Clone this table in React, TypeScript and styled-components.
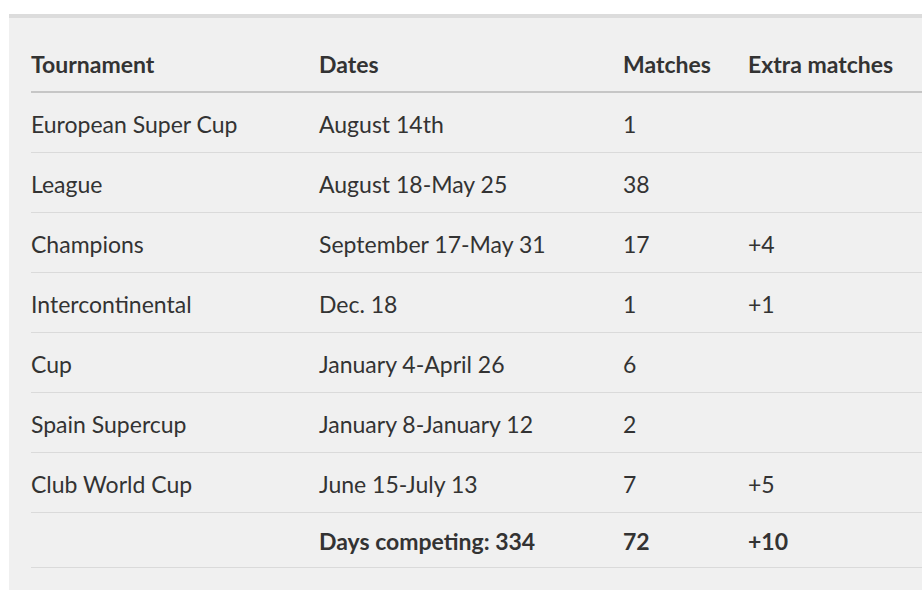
import React from "react";
import styled, { createGlobalStyle } from "styled-components";

const Global = createGlobalStyle`
  html, body { margin: 0; padding: 0; background: #ffffff; }
  body { font-family: Lato, "Open Sans", sans-serif; }
`;

const Page = styled.div`
  width: 922px;
  height: 601px;
  overflow: hidden;
  padding: 14px 0 0 9px;
  box-sizing: border-box;
`;

const Panel = styled.section`
  width: 940px;
  background: #f0f0f0;
  border-top: 4px solid #dcdcdc;
  padding: 15px 0 22px 22px;
  box-sizing: border-box;
`;

const Table = styled.table`
  width: 100%;
  border-collapse: collapse;
  font-family: Lato, "Open Sans", sans-serif;
  font-size: 23px;
  line-height: 1.2;
  color: #333;
`;

const Col = styled.col<{ $w?: number }>`
  width: ${(p) => (p.$w ? `${p.$w}px` : "auto")};
`;

const HeadCell = styled.th`
  text-align: left;
  font-weight: 700;
  height: 53px;
  padding: 5px 0 0 0;
  vertical-align: middle;
  border-bottom: 2px solid #c6c6c6;
  color: #333;
`;

const Row = styled.tr<{ $total?: boolean }>`
  & > td {
    height: ${(p) => (p.$total ? "50px" : "55px")};
    font-weight: ${(p) => (p.$total ? 700 : 400)};
  }
`;

const Cell = styled.td`
  padding: 4px 0 0 0;
  vertical-align: middle;
  border-bottom: 1px solid #dadada;
  color: #333;
`;

const rows = [
  ["European Super Cup", "August 14th", "1", ""],
  ["League", "August 18-May 25", "38", ""],
  ["Champions", "September 17-May 31", "17", "+4"],
  ["Intercontinental", "Dec. 18", "1", "+1"],
  ["Cup", "January 4-April 26", "6", ""],
  ["Spain Supercup", "January 8-January 12", "2", ""],
  ["Club World Cup", "June 15-July 13", "7", "+5"],
];

export default function App() {
  return (
    <Page>
      <Global />
      <Panel>
        <Table>
          <colgroup>
            <Col $w={288} />
            <Col $w={304} />
            <Col $w={125} />
            <Col />
          </colgroup>
          <thead>
            <tr>
              <HeadCell>Tournament</HeadCell>
              <HeadCell>Dates</HeadCell>
              <HeadCell>Matches</HeadCell>
              <HeadCell>Extra matches</HeadCell>
            </tr>
          </thead>
          <tbody>
            {rows.map((r) => (
              <Row key={r[0]}>
                {r.map((c, i) => (
                  <Cell key={i}>{c}</Cell>
                ))}
              </Row>
            ))}
            <Row $total>
              <Cell></Cell>
              <Cell>Days competing: 334</Cell>
              <Cell>72</Cell>
              <Cell>+10</Cell>
            </Row>
          </tbody>
        </Table>
      </Panel>
    </Page>
  );
}
